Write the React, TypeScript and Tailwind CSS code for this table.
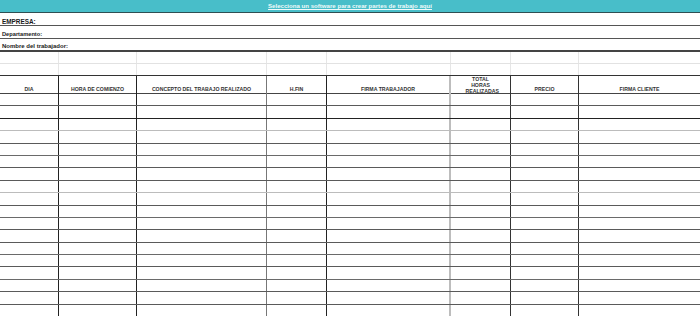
const cols = "grid grid-cols-[59px_78px_130px_60px_124px_60px_68px_121px]";

// vertical rule colour for each column's right edge in the table body
const colBorders = [
  "border-r border-[#222]",
  "border-r border-[#222]",
  "border-r border-[#777]",
  "border-r border-[#222]",
  "border-r-2 border-[#bdbdbd]",
  "border-r border-[#333]",
  "border-r border-[#333]",
  "",
];

const headers = [
  "DIA",
  "HORA DE COMIENZO",
  "CONCEPTO DEL TRABAJO REALIZADO",
  "H.FIN",
  "FIRMA TRABAJADOR",
  "TOTAL HORAS REALIZADAS",
  "PRECIO",
  "FIRMA CLIENTE",
];

// line under each data row
const rowLines = [
  "border-[#5a5a5a]",
  "border-[#222]",
  "border-[#bcbcbc]",
  "border-[#5a5a5a]",
  "border-[#6a6a6a]",
  "border-[#5a5a5a]",
  "border-[#5a5a5a]",
  "border-[#bcbcbc]",
  "border-[#5a5a5a]",
  "border-[#6a6a6a]",
  "border-[#5a5a5a]",
  "border-[#5a5a5a]",
  "border-[#6a6a6a]",
  "border-[#5a5a5a]",
  "border-[#6a6a6a]",
  "border-[#5a5a5a]",
  "border-[#5a5a5a]",
  "border-[#8a8a8a]",
];

function BlankRow({ last }: { last?: boolean }) {
  return (
    <div className={`${cols} h-[12px] border-b ${last ? "border-[#333]" : "border-[#e2e2e2]"}`}>
      {headers.map((_, i) => (
        <div key={i} className={i < 7 ? "border-r border-[#e6e6e6]" : ""} />
      ))}
    </div>
  );
}

export default function App() {
  return (
    <div className="w-[700px] h-[316px] overflow-hidden bg-white text-[#1a1a1a] font-['Liberation_Sans',Arial,sans-serif]">
      {/* title bar */}
      <div className="h-[13px] bg-[#48bec9] border-b border-[#2f4f52] flex items-center justify-center">
        <span className="text-[6.1px] font-bold text-[#eefafa] underline leading-none">
          Selecciona un software para crear partes de trabajo aquí
        </span>
      </div>

      {/* company info */}
      <div className="h-[13px] border-b border-[#555] flex items-end pl-[2px] text-[6.4px] font-bold leading-[7px]">EMPRESA:</div>
      <div className="h-[13px] border-b border-[#555] flex items-end pl-[2px] text-[5.7px] font-bold leading-[7px]">Departamento:</div>
      <div className="h-[13px] border-b-2 border-[#444] flex items-end pl-[2px] text-[6px] font-bold leading-[7px]">Nombre del trabajador:</div>

      <BlankRow />
      <BlankRow last />

      {/* header */}
      <div className={`${cols} h-[18px] border-b border-[#444]`}>
        {headers.map((h, i) => (
          <div
            key={h}
            className={`${colBorders[i]} flex ${i === 5 ? "items-start pt-0" : "items-end pb-[2px]"} justify-center text-center text-[5.2px] font-bold leading-[6px] text-[#333]`}
          >
            {i === 5 ? (
              <span className="w-[30px]">TOTAL HORAS REALIZADAS</span>
            ) : (
              <span>{h}</span>
            )}
          </div>
        ))}
      </div>

      {/* body */}
      {rowLines.map((line, r) => (
        <div key={r} className={`${cols} h-[12.4px] border-b ${line}`}>
          {colBorders.map((b, i) => (
            <div key={i} className={b} />
          ))}
        </div>
      ))}
    </div>
  );
}
